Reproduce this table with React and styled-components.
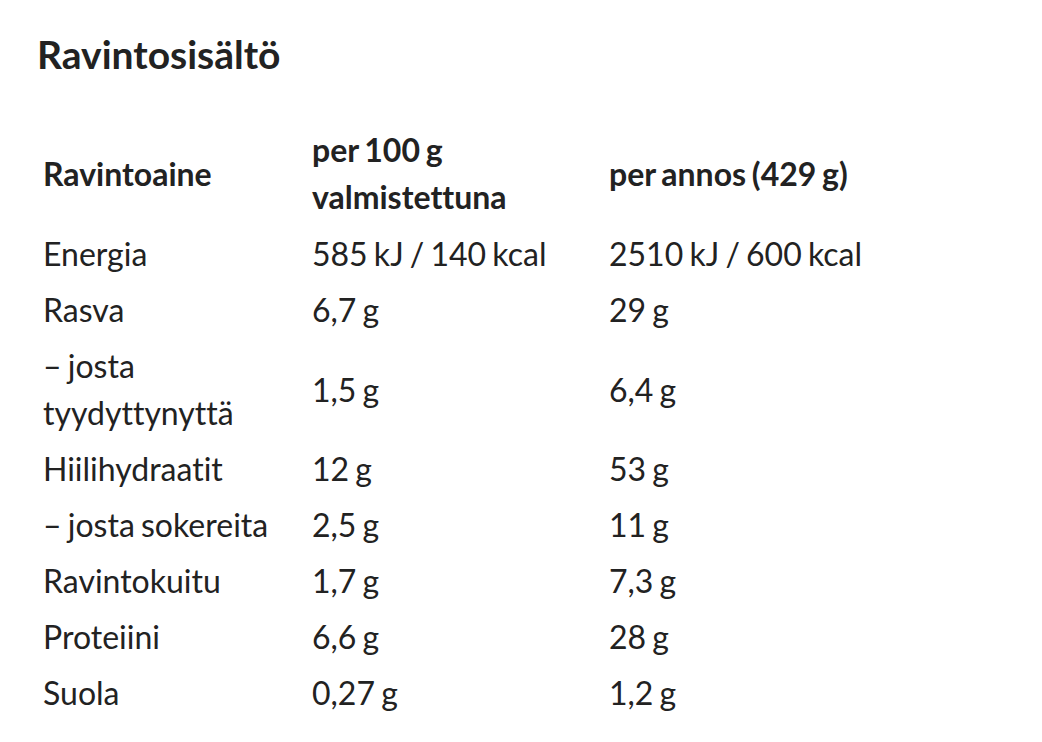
import React from "react";
import styled, { createGlobalStyle } from "styled-components";

const Global = createGlobalStyle`
  html, body { margin: 0; padding: 0; background: #ffffff; }
  body {
    font-family: Lato, "Open Sans", sans-serif;
    color: #222222;
    font-variant-ligatures: no-common-ligatures;
  }
`;

const Page = styled.main`
  padding: 31px 0 0 37px;
`;

const Title = styled.h2`
  margin: 0 0 44px 0;
  font-size: 39px;
  font-weight: 700;
  line-height: 1.2;
`;

const Table = styled.table`
  border-collapse: collapse;
  table-layout: fixed;
  width: 866px;
  font-size: 32px;
  line-height: 47px;
  word-spacing: -2px;
`;

const Col = styled.col`
  width: ${(p) => p.$w}px;
`;

const Head = styled.th`
  text-align: left;
  font-weight: 700;
  vertical-align: middle;
  padding: 4.5px 6px 5.5px;
`;

const Cell = styled.td`
  text-align: left;
  vertical-align: middle;
  padding: 4.5px 6px;
  font-weight: 400;
`;

const rows = [
  ["Energia", "585 kJ / 140 kcal", "2510 kJ / 600 kcal"],
  ["Rasva", "6,7 g", "29 g"],
  ["– josta tyydyttynyttä", "1,5 g", "6,4 g"],
  ["Hiilihydraatit", "12 g", "53 g"],
  ["– josta sokereita", "2,5 g", "11 g"],
  ["Ravintokuitu", "1,7 g", "7,3 g"],
  ["Proteiini", "6,6 g", "28 g"],
  ["Suola", "0,27 g", "1,2 g"],
];

export default function App() {
  return (
    <>
      <Global />
      <Page>
        <Title>Ravintosisältö</Title>
        <Table>
          <colgroup>
            <Col $w={269} />
            <Col $w={297} />
            <Col $w={300} />
          </colgroup>
          <thead>
            <tr>
              <Head>Ravintoaine</Head>
              <Head>per 100 g valmistettuna</Head>
              <Head>per annos (429 g)</Head>
            </tr>
          </thead>
          <tbody>
            {rows.map((r) => (
              <tr key={r[0]}>
                <Cell>{r[0]}</Cell>
                <Cell>{r[1]}</Cell>
                <Cell>{r[2]}</Cell>
              </tr>
            ))}
          </tbody>
        </Table>
      </Page>
    </>
  );
}
